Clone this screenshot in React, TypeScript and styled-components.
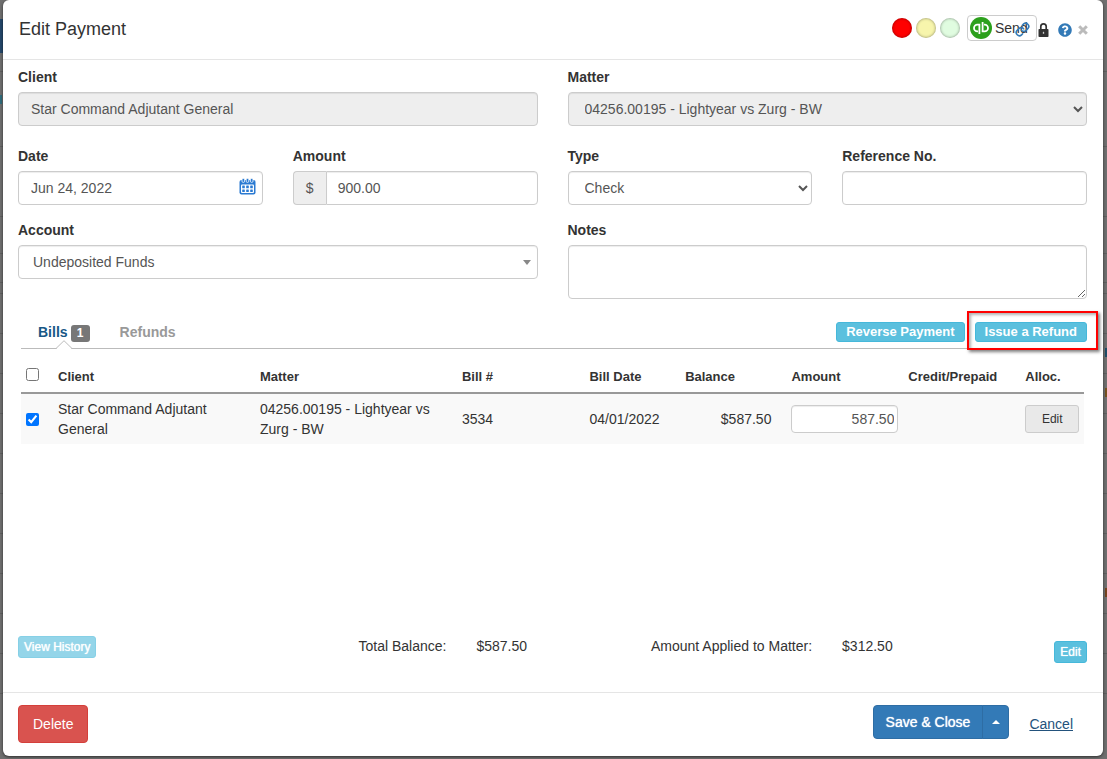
import React from "react";
import styled, { createGlobalStyle, css } from "styled-components";
import { Link } from "lucide-react";
import { FaQuestionCircle } from "react-icons/fa";

const Global = createGlobalStyle`
  *, *::before, *::after { box-sizing: border-box; }
  body {
    margin: 0;
    background: #6f6f6f;
    color: #333;
    font: 14px/20px "Liberation Sans", Arial, sans-serif;
  }
  button, input, select, textarea { font: inherit; color: inherit; }
  button { cursor: pointer; }
`;

const Page = styled.main`
  position: relative;
  display: flex;
  min-height: 100vh;
  padding: 0 4px 3px 3px;
  overflow: hidden;
`;

const Behind = styled.div`
  position: absolute;
  inset: 0;
  overflow: hidden;
`;

const BehindBlock = styled.span<{ $y: number; $h: number; $color: string }>`
  position: absolute;
  left: 0;
  right: 50%;
  top: ${(p) => p.$y}px;
  height: ${(p) => p.$h}px;
  background: ${(p) => p.$color};
`;

const BehindRule = styled.span<{ $y: number }>`
  position: absolute;
  left: 0;
  right: 0;
  top: ${(p) => p.$y}px;
  height: 1px;
  background: #5f5f5f;
`;

const BehindMark = styled.span<{ $y: number; $color: string; $side: "left" | "right" }>`
  position: absolute;
  ${(p) => p.$side}: 0;
  top: ${(p) => p.$y}px;
  width: 2px;
  height: 9px;
  background: ${(p) => p.$color};
`;

const Dialog = styled.section`
  position: relative;
  flex: 1;
  min-width: 0;
  display: flex;
  flex-direction: column;
  background: #fff;
  border-radius: 6px;
  box-shadow: 0 1px 3px rgba(0, 0, 0, 0.6);
`;

const Header = styled.header`
  display: flex;
  align-items: center;
  justify-content: space-between;
  height: 60px;
  padding: 0 15px 2px 16px;
  border-bottom: 1px solid #e5e5e5;
`;

const Title = styled.h1`
  margin: 0;
  font-size: 18px;
  line-height: 26px;
  font-weight: 400;
`;

const Tools = styled.div`
  display: flex;
  align-items: center;
  padding-bottom: 2px;
`;

const Light = styled.span<{ $color: string }>`
  width: 20px;
  height: 20px;
  margin-right: 4px;
  border-radius: 50%;
  background: ${(p) => p.$color};
  box-shadow: inset 0 0 3px rgba(0, 0, 0, 0.45);
`;

const SendButton = styled.button`
  position: relative;
  display: flex;
  align-items: center;
  gap: 3px;
  width: 70px;
  height: 26px;
  margin-left: 3px;
  padding: 0 2px;
  border: 1px solid #ccc;
  border-radius: 4px;
  background: #fff;
  color: #333;
  svg { flex: none; }
`;

const LinkIcon = styled(Link)`
  position: absolute;
  right: 6px;
  top: 6px;
  color: #337ab7;
`;

const IconButton = styled.button<{ $color: string; $gap: number }>`
  display: flex;
  margin: 4px 0 0 ${(p) => p.$gap}px;
  padding: 0;
  border: 0;
  background: none;
  color: ${(p) => p.$color};
`;

const Form = styled.form`
  display: grid;
  grid-template-columns: repeat(4, minmax(0, 1fr));
  column-gap: 30px;
  row-gap: 15px;
  padding: 7px 16px 0 15px;
`;

const Field = styled.div<{ $span?: number; $after?: number }>`
  grid-column: span ${(p) => p.$span ?? 1};
  display: flex;
  flex-direction: column;
  gap: 5px;
  min-width: 0;
  margin-bottom: ${(p) => p.$after ?? 0}px;
  label { font-weight: 700; }
`;

const control = css`
  width: 100%;
  height: 34px;
  padding: 6px 12px;
  border: 1px solid #ccc;
  border-radius: 4px;
  background: #fff;
  color: #555;
  box-shadow: inset 0 1px 1px rgba(0, 0, 0, 0.075);
  &:disabled { background: #eee; opacity: 1; }
`;

const TextInput = styled.input`${control}`;

const Select = styled.select`${control}`;

const PlainSelect = styled.select`
  ${control}
  appearance: none;
  padding: 6px 14px;
`;

const TextArea = styled.textarea`
  ${control}
  display: block;
  height: 54px;
`;

const Adorned = styled.div`
  position: relative;
  display: flex;
`;

const CalendarButton = styled.button`
  position: absolute;
  right: 7px;
  top: 7px;
  display: flex;
  padding: 0;
  border: 0;
  background: none;
`;

const Caret = styled.span<{ $up?: boolean }>`
  border: 4px solid transparent;
  ${(p) => (p.$up
    ? css`border-top: 0; border-bottom-color: #fff;`
    : css`
        position: absolute;
        right: 7px;
        top: 15px;
        border-bottom: 0;
        border-top: 5px solid #888;
        pointer-events: none;
      `)}
`;

const Currency = styled.span`
  flex: none;
  width: 33px;
  padding: 6px 0;
  border: 1px solid #ccc;
  border-right: 0;
  border-radius: 4px 0 0 4px;
  background: #eee;
  color: #555;
  text-align: center;
  & + input { border-radius: 0 4px 4px 0; padding-left: 11px; }
`;

const Bills = styled.div`
  flex: 1;
  padding: 13px 19px 0 18px;
`;

const TabBar = styled.div`
  display: flex;
  align-items: center;
  justify-content: space-between;
  height: 37px;
  padding: 4px 0 0 9px;
  border-bottom: 1px solid #bbb;
`;

const Tabs = styled.div`
  display: flex;
  gap: 14px;
`;

const Tab = styled.button<{ $active?: boolean }>`
  position: relative;
  display: flex;
  align-items: center;
  gap: 3px;
  height: 32px;
  padding: 0 8px;
  border: 0;
  background: none;
  font-weight: 700;
  color: ${(p) => (p.$active ? "#185886" : "#999")};
`;

const TabNotch = styled.svg`
  position: absolute;
  left: 26px;
  bottom: -1px;
`;

const Count = styled.span`
  width: 19px;
  margin-top: 2px;
  border-radius: 3px;
  background: #777;
  color: #fff;
  font-size: 12px;
  line-height: 17px;
  text-align: center;
`;

const Actions = styled.div`
  display: flex;
  gap: 10px;
  margin-right: -3px;
`;

const ActionButton = styled.button`
  height: 20px;
  padding: 0 9px;
  border: 1px solid #46b8da;
  border-radius: 3px;
  background: #5bc0de;
  color: #fff;
  font-size: 13px;
  line-height: 18px;
  font-weight: 700;
`;

const Highlighted = styled.div`
  position: relative;
  display: flex;
`;

const HighlightFrame = styled.span`
  position: absolute;
  inset: -11px -11px -8px -8px;
  border: 2px solid #f00;
  box-shadow: 2px 2px 3px rgba(0, 0, 0, 0.5), inset 2px 2px 3px rgba(0, 0, 0, 0.3);
  pointer-events: none;
`;

const Table = styled.table`
  width: 100%;
  border-collapse: collapse;
  table-layout: fixed;
  th {
    height: 44px;
    padding: 12px 0 0;
    border-bottom: 2px solid #999;
    font-size: 13px;
    text-align: left;
  }
  td {
    height: 50px;
    padding: 5px 0;
    background: #f9f9f9;
  }
`;

const Check = styled.input`
  display: block;
  width: 13px;
  height: 13px;
  margin: 0 0 0 5px;
  th & { margin-bottom: 5px; }
`;

const Money = styled.td`
  text-align: right;
  && { padding-right: 20px; }
`;

const AmountInput = styled.input`
  ${control}
  width: 107px;
  height: 28px;
  padding: 0 3px;
  text-align: right;
`;

const RowButton = styled.button`
  display: block;
  width: 54px;
  height: 28px;
  padding: 0;
  border: 1px solid #ccc;
  border-radius: 3px;
  background: #e9e9e9;
  font-size: 12px;
`;

const Summary = styled.div`
  display: flex;
  align-items: flex-start;
  height: 56px;
  padding: 0 16px 0 15px;
`;

const SmallButton = styled.button<{ $muted?: boolean }>`
  height: 22px;
  padding: 0 5px;
  border: 1px solid #46b8da;
  border-radius: 3px;
  background: #5bc0de;
  color: #fff;
  font-size: 12px;
  line-height: 20px;
  text-shadow: 0 0 1px #fff;
  opacity: ${(p) => (p.$muted ? 0.65 : 1)};
`;

const Totals = styled.dl`
  flex: 1;
  display: flex;
  margin: 0;
  dt { text-align: right; }
  dt:first-of-type { width: 350px; }
  dt:last-of-type { width: 285px; }
  dd { margin: 0 0 0 30px; }
`;

const EditTotals = styled(SmallButton)`
  margin-top: 5px;
`;

const Footer = styled.footer`
  display: flex;
  justify-content: space-between;
  align-items: flex-start;
  padding: 12px 30px 13px 15px;
  border-top: 1px solid #e5e5e5;
`;

const FooterGroup = styled.div`
  display: flex;
`;

const DeleteButton = styled.button`
  height: 38px;
  padding: 0 14px;
  border: 1px solid #d43f3a;
  border-radius: 4px;
  background: #d9534f;
  color: #fff;
`;

const SaveButton = styled.button<{ $menu?: boolean }>`
  display: flex;
  align-items: center;
  justify-content: center;
  height: 34px;
  padding: 0 12px;
  border: 1px solid #2e6da4;
  border-radius: 4px 0 0 4px;
  background: #337ab7;
  color: #fff;
  text-shadow: 0 0 1px #fff;
  ${(p) => p.$menu && css`
    width: 27px;
    margin-left: -1px;
    padding: 0;
    border-radius: 0 4px 4px 0;
  `}
`;

const CancelLink = styled.a`
  margin: 9px 0 0 20px;
  color: #23527c;
  text-decoration: underline;
`;

const QuickBooksLogo = () => (
  <svg width="22" height="22" viewBox="0 0 22 22" aria-hidden="true">
    <circle cx="11" cy="11" r="11" fill="#2ca01c" />
    <g fill="none" stroke="#fff" strokeWidth="1.8">
      <path d="M9.400 17V7.600H7.400a3.400 3.400 0 0 0 0 6.800h.6" />
      <path d="M12.600 5v9.400h2a3.400 3.400 0 0 0 0-6.800H14" />
    </g>
  </svg>
);

const LockIcon = () => (
  <svg width="11" height="14" viewBox="0 0 11 14" aria-hidden="true">
    <path d="M2.800 6.500V3.600a2.700 2.700 0 0 1 5.400 0v2.900" fill="none" stroke="currentColor" strokeWidth="1.700" />
    <rect x="0.500" y="6" width="10" height="8" rx="0.800" fill="currentColor" />
    <path d="M5.500 8.800v2" stroke="#ccc" strokeWidth="1.300" />
  </svg>
);

const CloseIcon = () => (
  <svg width="10" height="10" viewBox="0 0 10 10" aria-hidden="true">
    <path d="M1.200 1.200l7.600 7.600M8.800 1.200l-7.600 7.600" stroke="currentColor" strokeWidth="3" />
  </svg>
);

const CalendarIcon = () => (
  <svg width="17" height="17" viewBox="0 0 17 17" aria-hidden="true">
    <rect x="0.500" y="2" width="16" height="14.500" rx="2" fill="#2a7ad2" />
    <g fill="#2a7ad2" stroke="#fff" strokeWidth="0.800">
      <rect x="3" y="0.400" width="2.600" height="4" rx="1.200" />
      <rect x="7.200" y="0.400" width="2.600" height="4" rx="1.200" />
      <rect x="11.400" y="0.400" width="2.600" height="4" rx="1.200" />
    </g>
    <rect x="2" y="6.500" width="13" height="8.500" rx="1" fill="#fff" />
    <g fill="#2a7ad2">
      {[3.2, 7.2, 11.2].map((x) => [7.6, 11.4].map((y) => (
        <rect key={`${x}-${y}`} x={x} y={y} width="2.600" height="2.600" rx="0.500" />
      )))}
    </g>
  </svg>
);

export default function App() {
  return (
    <>
      <Global />
      <Page>
        <Behind aria-hidden="true">
          <BehindBlock $y={19} $h={34} $color="#25476a" />
          {[71, 146, 216, 253, 282, 293, 333, 373, 413, 453, 493, 533, 573, 613, 653, 693].map((y) => (
            <BehindRule key={y} $y={y} />
          ))}
          <BehindMark $side="left" $y={95} $color="#2f6c7c" />
          <BehindMark $side="right" $y={348} $color="#1d4c66" />
          <BehindMark $side="right" $y={388} $color="#75511f" />
          <BehindMark $side="right" $y={588} $color="#75431f" />
        </Behind>
        <Dialog role="dialog" aria-labelledby="dialog-title">
          <Header>
            <Title id="dialog-title">Edit Payment</Title>
            <Tools>
              <Light $color="#ff0000" />
              <Light $color="#f7f5ac" />
              <Light $color="#e0fce0" />
              <SendButton type="button">
                <QuickBooksLogo />
                Send
                <LinkIcon size={15} strokeWidth={2.5} />
              </SendButton>
              <IconButton type="button" aria-label="Lock" $color="#333" $gap={1}><LockIcon /></IconButton>
              <IconButton type="button" aria-label="Help" $color="#337ab7" $gap={9}><FaQuestionCircle size={14} /></IconButton>
              <IconButton type="button" aria-label="Close" $color="#bbb" $gap={6}><CloseIcon /></IconButton>
            </Tools>
          </Header>

          <Form>
            <Field $span={2} $after={5}>
              <label htmlFor="client">Client</label>
              <TextInput id="client" disabled defaultValue="Star Command Adjutant General" />
            </Field>
            <Field $span={2} $after={5}>
              <label htmlFor="matter">Matter</label>
              <Select id="matter" disabled><option>04256.00195 - Lightyear vs Zurg - BW</option></Select>
            </Field>
            <Field>
              <label htmlFor="date">Date</label>
              <Adorned>
                <TextInput id="date" defaultValue="Jun 24, 2022" />
                <CalendarButton type="button" aria-label="Choose date"><CalendarIcon /></CalendarButton>
              </Adorned>
            </Field>
            <Field>
              <label htmlFor="amount">Amount</label>
              <Adorned>
                <Currency>$</Currency>
                <TextInput id="amount" defaultValue="900.00" />
              </Adorned>
            </Field>
            <Field>
              <label htmlFor="type">Type</label>
              <Select id="type"><option>Check</option></Select>
            </Field>
            <Field>
              <label htmlFor="reference">Reference No.</label>
              <TextInput id="reference" />
            </Field>
            <Field $span={2}>
              <label htmlFor="account">Account</label>
              <Adorned>
                <PlainSelect id="account"><option>Undeposited Funds</option></PlainSelect>
                <Caret />
              </Adorned>
            </Field>
            <Field $span={2}>
              <label htmlFor="notes">Notes</label>
              <TextArea id="notes" />
            </Field>
          </Form>

          <Bills>
            <TabBar>
              <Tabs role="tablist">
                <Tab type="button" role="tab" aria-selected="true" $active>
                  Bills <Count>1</Count>
                  <TabNotch width="16" height="9" viewBox="0 0 16 9">
                    <path d="M0 8.500 8 0.700l8 7.800" fill="#fff" stroke="#bbb" />
                    <path d="M1 8.500h14" stroke="#fff" />
                  </TabNotch>
                </Tab>
                <Tab type="button" role="tab" aria-selected="false">Refunds</Tab>
              </Tabs>
              <Actions>
                <ActionButton type="button">Reverse Payment</ActionButton>
                <Highlighted>
                  <ActionButton type="button">Issue a Refund</ActionButton>
                  <HighlightFrame />
                </Highlighted>
              </Actions>
            </TabBar>
            <Table>
              <colgroup>
                <col style={{ width: "37px" }} />
                <col style={{ width: "19%" }} />
                <col style={{ width: "19%" }} />
                <col style={{ width: "12%" }} />
                <col style={{ width: "9%" }} />
                <col style={{ width: "10%" }} />
                <col style={{ width: "11%" }} />
                <col style={{ width: "11%" }} />
                <col />
              </colgroup>
              <thead>
                <tr>
                  <th><Check type="checkbox" aria-label="Select all bills" /></th>
                  <th>Client</th>
                  <th>Matter</th>
                  <th>Bill #</th>
                  <th>Bill Date</th>
                  <th>Balance</th>
                  <th>Amount</th>
                  <th>Credit/Prepaid</th>
                  <th>Alloc.</th>
                </tr>
              </thead>
              <tbody>
                <tr>
                  <td><Check type="checkbox" defaultChecked aria-label="Select bill 3534" /></td>
                  <td>Star Command Adjutant General</td>
                  <td>04256.00195 - Lightyear vs Zurg - BW</td>
                  <td>3534</td>
                  <td>04/01/2022</td>
                  <Money>$587.50</Money>
                  <td><AmountInput aria-label="Amount for bill 3534" defaultValue="587.50" /></td>
                  <td />
                  <td><RowButton type="button">Edit</RowButton></td>
                </tr>
              </tbody>
            </Table>
          </Bills>

          <Summary>
            <SmallButton type="button" $muted>View History</SmallButton>
            <Totals>
              <dt>Total Balance:</dt><dd>$587.50</dd>
              <dt>Amount Applied to Matter:</dt><dd>$312.50</dd>
            </Totals>
            <EditTotals type="button">Edit</EditTotals>
          </Summary>

          <Footer>
            <DeleteButton type="button">Delete</DeleteButton>
            <FooterGroup>
              <SaveButton type="button">Save &amp; Close</SaveButton>
              <SaveButton type="button" $menu aria-label="More save options"><Caret $up /></SaveButton>
              <CancelLink href="#">Cancel</CancelLink>
            </FooterGroup>
          </Footer>
        </Dialog>
      </Page>
    </>
  );
}
